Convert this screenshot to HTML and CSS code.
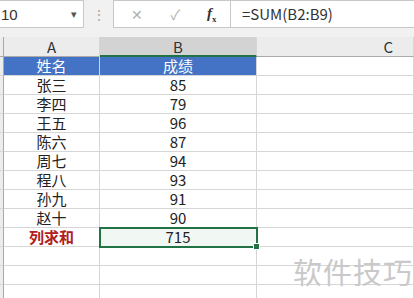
FILE: index.html
```html
<!DOCTYPE html>
<html lang="zh">
<head>
    <meta charset="UTF-8">
    <meta name="viewport" content="width=device-width, initial-scale=1.0">
    <title>列求和</title>
    <link rel="stylesheet" href="styles.css">
</head>
<body>

<div class="toolbar">
    <div class="namebox">
        <span>10</span>
        <span class="arrow">&#9662;</span>
    </div>
    <div class="dots">&#8942;</div>
    <div class="formula">
        <div class="btns">
            <span class="btn">&#10005;</span>
            <span class="btn">&#10003;</span>
            <span class="btn fx"><i>f</i><sub>x</sub></span>
        </div>
        <div class="text">=SUM(B2:B9)</div>
    </div>
</div>

<div class="sheet" id="sheet">
    <div class="rh colhead"></div>
    <div class="colhead">A</div>
    <div class="colhead active">B</div>
    <div class="colhead c">C</div>
</div>

<div class="watermark">软件技巧</div>

<script>
    // данные таблицы
    const rows = [
        ['姓名', '成绩'],
        ['张三', 85], ['李四', 79], ['王五', 96], ['陈六', 87],
        ['周七', 94], ['程八', 93], ['孙九', 91], ['赵十', 90],
        ['列求和', 715],
        ['', ''], ['', ''], ['', '']
    ];
    const sheet = document.getElementById('sheet');
    rows.forEach((r, i) => {
        const cells = ['', r[0], r[1], ''];
        cells.forEach((v, j) => {
            const cell = document.createElement('div');
            cell.textContent = v;
            if (j === 0) cell.classList.add('rh');
            if (i === 0 && (j === 1 || j === 2)) cell.classList.add('head');
            if (i === 9 && j === 1) cell.classList.add('total');
            if (i === 9 && j === 2) cell.classList.add('selected');
            sheet.appendChild(cell);
        });
    });
</script>

</body>
</html>
```

FILE: styles.css
```css
body {
    margin: 0;
    padding: 0;
    width: 414px;
    height: 298px;
    overflow: hidden;
    position: relative;
    background-color: #fff;
    font-family: "Noto Sans CJK SC", "Liberation Sans", sans-serif;
    color: #222;
}
.toolbar {
    display: flex;
    height: 37px;
    background-color: #f1f1f1;
    box-sizing: border-box;
    padding-bottom: 9px;
}
.namebox {
    width: 84px;
    background-color: #fff;
    border: 1px solid #c8c8c8;
    border-left: none;
    box-sizing: border-box;
    display: flex;
    align-items: center;
    justify-content: space-between;
    padding: 0 6px 0 1px;
    font-family: "Liberation Sans", sans-serif;
    font-size: 15px;
    color: #333;
}
.namebox .arrow {
    font-size: 11px;
    color: #555;
}
.dots {
    width: 29px;
    text-align: center;
    color: #aaa;
    font-size: 14px;
    line-height: 28px;
}
.formula {
    flex: 1;
    display: flex;
    background-color: #fff;
    border: 1px solid #c8c8c8;
    border-right: none;
}
.btns {
    width: 112px;
    display: flex;
    align-items: center;
    justify-content: space-around;
    border-right: 1px solid #c8c8c8;
    padding-left: 4px;
}
.btn {
    color: #b0b0b0;
    font-size: 14px;
}
.btn.fx {
    color: #333;
    font-family: "Liberation Serif", serif;
    font-size: 15px;
    font-weight: bold;
}
.btn.fx sub {
    font-size: 9px;
}
.formula .text {
    padding-left: 11px;
    line-height: 26px;
    font-size: 15px;
    color: #333;
}
.sheet {
    display: grid;
    grid-template-columns: 4px 96px 157px 157px;
    grid-template-rows: 20px;
    grid-auto-rows: 19px;
}
.sheet div {
    box-sizing: border-box;
    border-right: 1px solid #d6d6d6;
    border-bottom: 1px solid #d6d6d6;
    text-align: center;
    font-size: 15px;
    line-height: 18px;
    white-space: nowrap;
}
.sheet .rh {
    background-color: #ececec;
    border-right: 1px solid #a9a9a9;
}
.sheet .colhead {
    background-color: #ececec;
    border-bottom: 1px solid #ababab;
    line-height: 20px;
    color: #333;
}
.sheet .colhead.active {
    background-color: #d3d3d3;
    border-bottom: 2px solid #217346;
}
.sheet .colhead.c {
    text-align: right;
    padding-right: 20px;
}
.sheet .head {
    background-color: #4472c4;
    color: #fff;
}
.sheet .total {
    color: #b02020;
    font-weight: bold;
}
.sheet .selected {
    position: relative;
    background-color: #f1f8f4;
    outline: 2px solid #217346;
    outline-offset: -1px;
}
.sheet .selected::after {
    content: "";
    position: absolute;
    right: -4px;
    bottom: -4px;
    width: 5px;
    height: 5px;
    background-color: #217346;
    border: 1px solid #fff;
}
.watermark {
    position: absolute;
    left: 293px;
    top: 250px;
    font-size: 29px;
    color: #c9c9c9;
    letter-spacing: 1px;
}
```
